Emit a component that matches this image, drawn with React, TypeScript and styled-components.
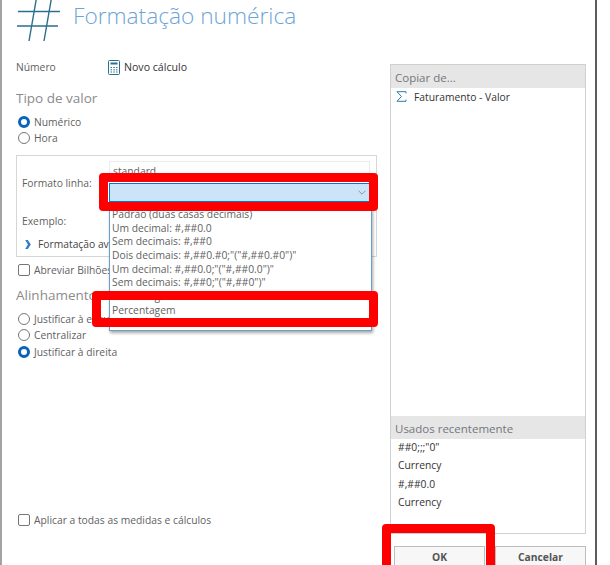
import React from 'react';
import styled, { createGlobalStyle } from 'styled-components';

const GlobalStyle = createGlobalStyle`
  html, body {
    margin: 0;
    padding: 0;
    background: #fff;
    overflow: hidden;
  }
  body {
    font-family: "Open Sans", "Liberation Sans", sans-serif;
  }
`;

const Page = styled.div`
  width: 610px;
  height: 565px;
  background: #fff;
`;

const Dialog = styled.div`
  position: relative;
  box-sizing: border-box;
  width: 597px;
  height: 565px;
  overflow: hidden;
  background: #fff;
  border-left: 2px solid #a3a3a3;
  border-right: 2px solid #5c5c5c;
  color: #5f5f5f;
  font-size: 10.3px;
  white-space: nowrap;
`;

const Header = styled.div`
  display: flex;
  align-items: flex-start;
  height: 47px;
  padding-left: 13px;
  gap: 12px;
`;

const Title = styled.div`
  font-size: 22.7px;
  font-weight: 300;
  line-height: 32px;
  color: #6ea3d6;
`;

const Body = styled.div`
  display: grid;
  grid-template-columns: 374px 196px;
  gap: 14px;
  height: 518px;
`;

const LeftPane = styled.div`
  display: flex;
  flex-direction: column;
  padding-left: 14px;
`;

const NumberRow = styled.div`
  display: flex;
  align-items: center;
  height: 20px;
  margin-top: 10px;
`;

const NumberLabel = styled.span`
  width: 92px;
`;

const CalcLink = styled.span`
  display: flex;
  align-items: center;
  gap: 4px;
  font-size: 10.6px;
  color: #333;
`;

const SectionTitle = styled.div`
  font-size: 13.5px;
  line-height: 18px;
  color: #8b8b8b;
`;

const TypeTitle = styled(SectionTitle)`
  margin-top: 12px;
`;

const RadioGroup = styled.div`
  display: flex;
  flex-direction: column;
  gap: 1.5px;
  margin-top: 8px;
  padding-left: 2px;
`;

const OptionRow = styled.div`
  display: flex;
  align-items: center;
  gap: 4px;
  height: 14.5px;
`;

const RadioDot = styled.span<{ $on?: boolean }>`
  box-sizing: border-box;
  width: 12px;
  height: 12px;
  border-radius: 50%;
  background: #fff;
  border: ${p => (p.$on ? '3.5px solid #0a63b8' : '1px solid #777')};
`;

const CheckBox = styled.span`
  box-sizing: border-box;
  width: 12px;
  height: 12px;
  border: 1px solid #777;
  border-radius: 2px;
  background: #fff;
`;

const FormatBox = styled.div`
  position: relative;
  box-sizing: border-box;
  height: 102px;
  margin-top: 9.5px;
  padding: 5px 5px 0;
  width: 361px;
  border: 1px solid #d6d6d6;
`;

const FormatRow = styled.div`
  display: flex;
  align-items: flex-start;
`;

const FormatLabel = styled.span`
  width: 87px;
  padding-top: 15px;
`;

const FormatFields = styled.div`
  display: flex;
  flex-direction: column;
`;

const TextField = styled.div`
  box-sizing: border-box;
  width: 261px;
  height: 22px;
  padding: 2px 3px 0;
  border: 1px solid #ececec;
  border-bottom: none;
`;

const ComboBox = styled.div`
  box-sizing: border-box;
  display: flex;
  align-items: center;
  justify-content: flex-end;
  width: 261px;
  height: 19px;
  padding-right: 3px;
  background: #cce4f7;
  border: 1px solid #0078d7;
`;

const ExampleLabel = styled.div`
  margin-top: 12px;
`;

const AdvancedRow = styled.div`
  display: flex;
  align-items: center;
  gap: 7px;
  margin-top: 9px;
  padding-left: 3px;
  color: #444;
`;

const DropList = styled.div`
  position: absolute;
  top: 51px;
  left: 92px;
  box-sizing: border-box;
  display: flex;
  flex-direction: column;
  width: 263px;
  height: 124px;
  padding: 0 2px;
  background: #fff;
  border: 1px solid #6a9ecb;
  box-shadow: 1px 2px 3px rgba(0, 0, 0, 0.35);
  z-index: 2;
`;

const DropItem = styled.div`
  height: 13.7px;
  line-height: 13px;
`;

const AbbrevRow = styled(OptionRow)`
  margin-top: 6px;
  padding-left: 2px;
`;

const AlignTitle = styled(SectionTitle)`
  margin-top: 8px;
`;

const AlignGroup = styled(RadioGroup)`
  gap: 2px;
  margin-top: 8px;
`;

const ApplyRow = styled(OptionRow)`
  margin-top: 154px;
  padding-left: 2px;
`;

const RightPane = styled.div`
  display: flex;
  flex-direction: column;
  padding-top: 17px;
`;

const Panel = styled.div`
  box-sizing: border-box;
  display: flex;
  flex-direction: column;
  height: 470px;
  border: 1px solid #d0d0d0;
`;

const PanelHeader = styled.div`
  height: 23px;
  line-height: 25px;
  padding-left: 4px;
  font-size: 11.5px;
  color: #73777c;
  background: #e6e6e6;
`;

const FieldItem = styled.div`
  display: flex;
  align-items: center;
  gap: 7px;
  height: 17px;
  padding-left: 5px;
  color: #333;
`;

const Spacer = styled.div`
  flex: 1;
`;

const RecentList = styled.div`
  display: flex;
  flex-direction: column;
  height: 95px;
  margin-top: -1px;
`;

const RecentItem = styled.div`
  height: 18.3px;
  line-height: 18.3px;
  padding-left: 7px;
  color: #333;
`;

const ButtonRow = styled.div`
  display: flex;
  justify-content: space-between;
  margin-top: 12px;
  padding-left: 4px;
`;

const Button = styled.div`
  box-sizing: border-box;
  width: 91px;
  height: 24px;
  line-height: 20px;
  text-align: center;
  font-weight: 700;
  color: #555;
  background: #f7f7f7;
  border: 1px solid #bdbdbd;
`;

// red annotation frames painted over the screenshot
const Highlight = styled.div<{ $x: number; $y: number; $w: number; $h: number }>`
  position: absolute;
  left: ${p => p.$x}px;
  top: ${p => p.$y}px;
  width: ${p => p.$w}px;
  height: ${p => p.$h}px;
  box-sizing: border-box;
  border: 9px solid #fe0000;
  border-radius: 4px;
  z-index: 3;
`;

const HashIcon = () => (
  <svg width="46" height="41" viewBox="0 3 46 41" fill="none" stroke="#2b6f8e" strokeWidth="1.4">
    <path d="M3 14.5H45M2 29H43M22 -2L14 44M37 -2L29 44" />
  </svg>
);

const CalcIcon = () => (
  <svg width="12" height="15" viewBox="0 0 12 15" fill="none" stroke="#2b6f8e" strokeWidth="1">
    <rect x="0.5" y="0.5" width="11" height="14" rx="1" />
    <path d="M2.5 3.5H9.5" strokeWidth="2" />
    <path d="M2.5 7.5H4M5.3 7.5H6.8M8 7.5H9.5M2.5 9.8H4M5.3 9.8H6.8M8 9.8H9.5M2.5 12H4M5.3 12H6.8M8 12H9.5" />
  </svg>
);

const SigmaIcon = () => (
  <svg width="11" height="11" viewBox="0 0 11 11" fill="none" stroke="#2b7fa8" strokeWidth="1">
    <path d="M10 2.4V0.7H1L5.4 5.5L1 10.3H10V8.6" />
  </svg>
);

const Chevron = () => (
  <svg width="8" height="5" viewBox="0 0 8 5" fill="none" stroke="#8a949c" strokeWidth="1">
    <path d="M0.6 0.8L4 4.2L7.4 0.8" />
  </svg>
);

const ExpandArrow = () => (
  <svg width="6" height="9" viewBox="0 0 6 9" fill="#2f7cc4">
    <path d="M0.2 0H2.8L5.8 4.5L2.8 9H0.2L2.9 4.5Z" />
  </svg>
);

const listOptions = [
  'Padrão (duas casas decimais)',
  'Um decimal: #,##0.0',
  'Sem decimais: #,##0',
  'Dois decimais: #,##0.#0;"("#,##0.#0")"',
  'Um decimal: #,##0.0;"("#,##0.0")"',
  'Sem decimais: #,##0;"("#,##0")"',
  'Percentagem',
  'Percentagem',
];

const recentFormats = ['##0;;;"0"', 'Currency', '#,##0.0', 'Currency'];

const App = () => {
  return (
    <Page>
      <GlobalStyle />
      <Dialog>
        <Header>
          <HashIcon />
          <Title>Formatação numérica</Title>
        </Header>
        <Body>
          <LeftPane>
            <NumberRow>
              <NumberLabel>Número</NumberLabel>
              <CalcLink>
                <CalcIcon />
                Novo cálculo
              </CalcLink>
            </NumberRow>
            <TypeTitle>Tipo de valor</TypeTitle>
            <RadioGroup>
              <OptionRow><RadioDot $on />Numérico</OptionRow>
              <OptionRow><RadioDot />Hora</OptionRow>
            </RadioGroup>
            <FormatBox>
              <FormatRow>
                <FormatLabel>Formato linha:</FormatLabel>
                <FormatFields>
                  <TextField>standard</TextField>
                  <ComboBox><Chevron /></ComboBox>
                </FormatFields>
              </FormatRow>
              <ExampleLabel>Exemplo:</ExampleLabel>
              <AdvancedRow>
                <ExpandArrow />
                Formatação avançada
              </AdvancedRow>
              <DropList>
                {listOptions.map((item, i) => <DropItem key={`${item}-${i}`}>{item}</DropItem>)}
              </DropList>
            </FormatBox>
            <AbbrevRow><CheckBox />Abreviar Bilhões, Milhões e Milhares</AbbrevRow>
            <AlignTitle>Alinhamento</AlignTitle>
            <AlignGroup>
              <OptionRow><RadioDot />Justificar à esquerda</OptionRow>
              <OptionRow><RadioDot />Centralizar</OptionRow>
              <OptionRow><RadioDot $on />Justificar à direita</OptionRow>
            </AlignGroup>
            <ApplyRow><CheckBox />Aplicar a todas as medidas e cálculos</ApplyRow>
          </LeftPane>
          <RightPane>
            <Panel>
              <PanelHeader>Copiar de...</PanelHeader>
              <FieldItem>
                <SigmaIcon />
                Faturamento - Valor
              </FieldItem>
              <Spacer />
              <PanelHeader>Usados recentemente</PanelHeader>
              <RecentList>
                {recentFormats.map((item, i) => <RecentItem key={`${item}-${i}`}>{item}</RecentItem>)}
              </RecentList>
            </Panel>
            <ButtonRow>
              <Button>OK</Button>
              <Button>Cancelar</Button>
            </ButtonRow>
          </RightPane>
        </Body>
        <Highlight $x={97} $y={173} $w={279} $h={38} />
        <Highlight $x={90} $y={291} $w={286} $h={36} />
        <Highlight $x={380} $y={524} $w={113} $h={50} />
      </Dialog>
    </Page>
  );
};

export default App;
